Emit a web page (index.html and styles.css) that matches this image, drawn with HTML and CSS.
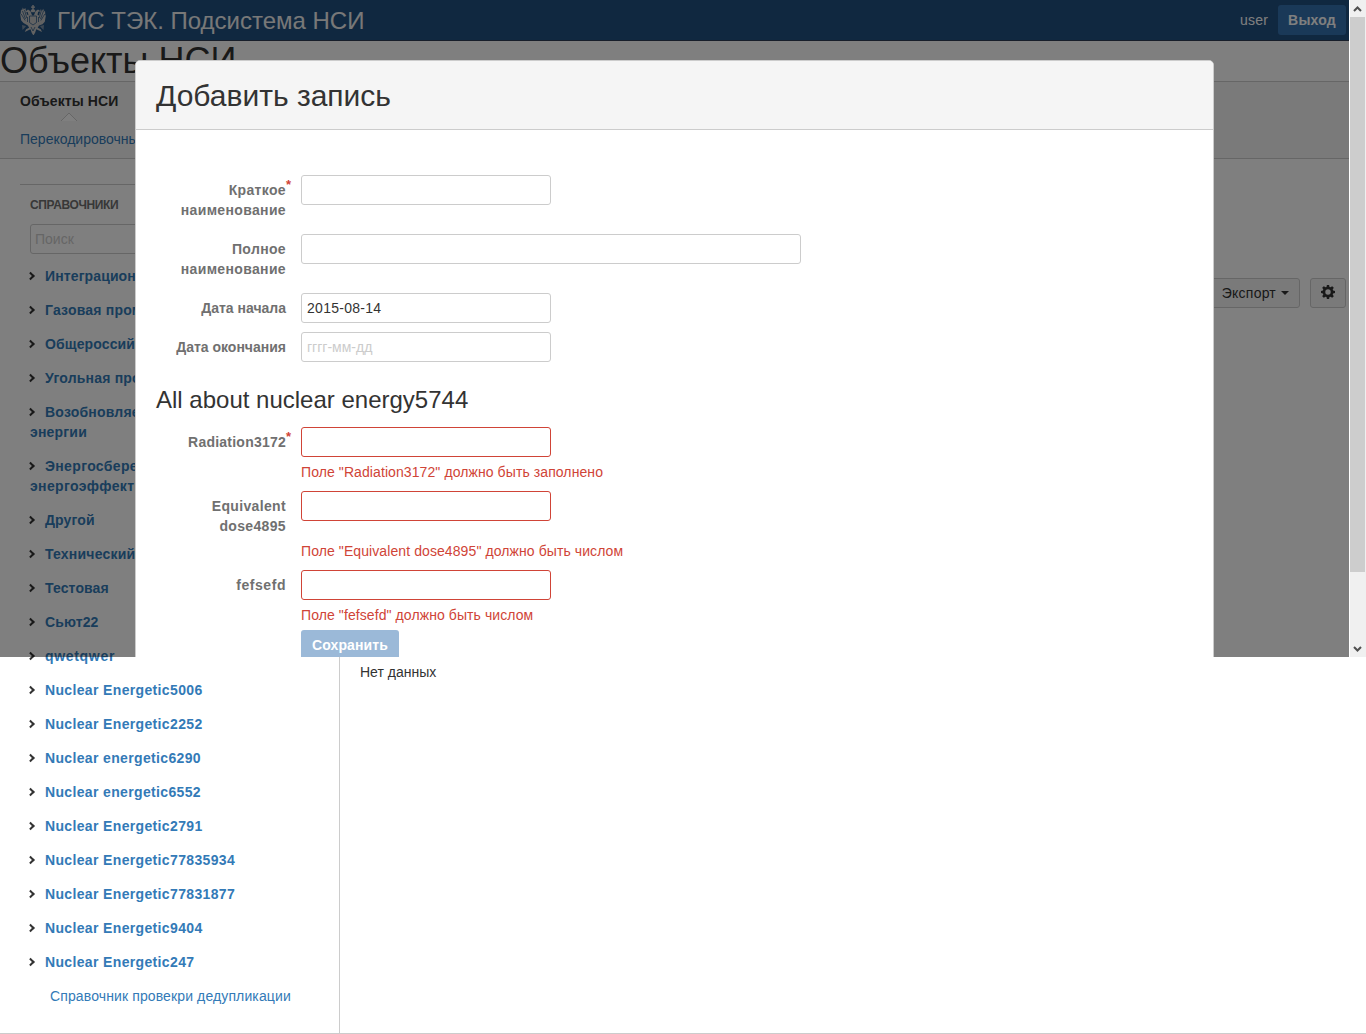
FILE: index.html
```html
<!DOCTYPE html>
<html lang="ru">
<head>
<meta charset="utf-8">
<title>ГИС ТЭК. Подсистема НСИ</title>
<link rel="stylesheet" href="styles.css">
</head>
<body>
<div class="page">
  <header class="header">
    <svg class="emblem" viewBox="0 0 26 30" width="26" height="30">
      <g fill="currentColor">
        <path d="M12.3 0h1.4v1.5h1.3v1.3h-1.3v1.5l1.6.7-.6 2.2h-3.4L10.700 5l1.600-.7V2.800H11V1.500h1.300z"/>
        <path d="M8 4.500l2.500 1.700 1.200 3.300L13 11l1.300-1.500 1.200-3.300L18 4.500l2.500 1.700-2.300.6-.7 3 1.500.7 1.700-6.200 1.500 1.500 1-2.100.8 3 1-1.200.3 4.200.5 1-1 6-2.300 2.500-3.500 1.200-1.300 2.300 3 1.500 1.300 2.800-3-1.600-2.700-1.100-1.200 3.500-1.700 2.700-1.700-2.700-1.200-3.500-2.700 1.100-3 1.600 1.300-2.800 3-1.500-1.300-2.300L3.500 18l-2.300-2.500-1-6 .5-1L1 4.300l1 1.200.8-3 1 2.100 1.500-1.500L7 9.500l1.500.7-.7-3-2.300-.6z"/>
        <path d="M2 20l4 1-1 1.500L2.500 25zM24 20l-4 1 1 1.500 2.500 2.500z" opacity=".55"/>
      </g>
      <g fill="none" stroke="#205081" stroke-width=".7">
        <path d="M2.500 6l3 8M1.200 9l4 6.500M4.500 5l2.300 8M23.500 6l-3 8M24.800 9l-4 6.500M21.500 5l-2.300 8M9.500 11h7v6.500L13 20l-3.500-2.500zM7.500 12v5M18.500 12v5M11 22l2 4 2-4"/>
      </g>
    </svg>
    <span class="brand">ГИС ТЭК. Подсистема НСИ</span>
    <span class="user">user</span>
    <a class="logout">Выход</a>
  </header>
  <h1 class="title">Объекты НСИ</h1>
  <nav class="nav">
    <a class="nav-current">Объекты НСИ</a>
    <a class="nav-link">Перекодировочны</a>
    <svg class="nav-arrow" width="18" height="9" viewBox="0 0 18 9"><path d="M1 9L9 1l8 8" fill="#fff" stroke="#ccc"/></svg>
  </nav>
  <div class="content">
    <aside class="sidebar">
      <div class="catalog">
        <h2 class="catalog-title">Справочники</h2>
        <input class="search" placeholder="Поиск">
        <ul class="tree">
          <li>Интеграцион</li>
          <li class="mid">Газовая пром</li>
          <li>Общероссий</li>
          <li class="mid">Угольная про</li>
          <li class="mid">Возобновляе<br>энергии</li>
          <li class="loose">Энергосбере<br>энергоэффекти</li>
          <li>Другой</li>
          <li class="mid">Технический</li>
          <li>Тестовая</li>
          <li>Сьют22</li>
          <li class="wider">qwetqwer</li>
          <li class="loose">Nuclear Energetic5006</li>
          <li class="loose">Nuclear Energetic2252</li>
          <li class="loose">Nuclear energetic6290</li>
          <li class="loose">Nuclear energetic6552</li>
          <li class="loose">Nuclear Energetic2791</li>
          <li class="loose">Nuclear Energetic77835934</li>
          <li class="loose">Nuclear Energetic77831877</li>
          <li class="loose">Nuclear Energetic9404</li>
          <li class="loose">Nuclear Energetic247</li>
          <li class="leaf">Справочник провекри дедупликации</li>
        </ul>
      </div>
    </aside>
    <main class="main">
      <div class="toolbar">
        <button class="btn export"><span>Экспорт</span><svg width="8" height="4" viewBox="0 0 8 4"><path d="M0 0h8L4 4z" fill="#333"/></svg></button>
        <button class="btn gear"><svg width="14" height="14" viewBox="0 0 14 14"><path fill="#333" fill-rule="evenodd" d="M5.900 0h2.200l.4 1.900 1 .4L11.200 1.200l1.600 1.600-1.100 1.700.4 1 1.900.4v2.200l-1.900.4-.4 1 1.100 1.700-1.600 1.600-1.700-1.100-1 .4-.4 1.900H5.900l-.4-1.900-1-.4-1.700 1.100-1.600-1.600 1.100-1.700-.4-1L0 8.100V5.900l1.900-.4.4-1-1.100-1.700 1.600-1.600 1.700 1.100 1-.4zM7 4.300a2.700 2.700 0 1 0 0 5.400 2.700 2.700 0 0 0 0-5.400z"/></svg></button>
      </div>
      <p class="empty">Нет данных</p>
    </main>
  </div>
</div>

<div class="viewport">
  <div class="blanket">
    <section class="dialog">
      <header class="dialog-head"><h2>Добавить запись</h2></header>
      <form class="form">
        <div class="field tall"><label class="req loose">Краткое<br>наименование</label><div><input></div></div>
        <div class="field tall"><label class="loose">Полное<br>наименование</label><div><input class="wide"></div></div>
        <div class="field"><label>Дата начала</label><div><input class="date" value="2015-08-14"></div></div>
        <div class="field"><label>Дата окончания</label><div><input placeholder="гггг-мм-дд"></div></div>
        <h3>All about nuclear energy5744</h3>
        <div class="field invalid"><label class="req mid">Radiation3172</label><div><input><p>Поле "Radiation3172" должно быть заполнено</p></div></div>
        <div class="field invalid two-line"><label class="loose">Equivalent<br>dose4895</label><div><input><p>Поле "Equivalent dose4895" должно быть числом</p></div></div>
        <div class="field invalid"><label class="wider">fefsefd</label><div><input><p>Поле "fefsefd" должно быть числом</p></div></div>
        <button class="save" type="button">Сохранить</button>
      </form>
    </section>
  </div>
  <div class="scrollbar">
    <svg width="17" height="17" viewBox="0 0 17 17"><path d="M5 11l3.500-3.500L12 11" fill="none" stroke="#505050" stroke-width="2"/></svg>
    <div class="thumb"></div>
    <svg width="17" height="17" viewBox="0 0 17 17"><path d="M5 7l3.500 3.500L12 7" fill="none" stroke="#505050" stroke-width="2"/></svg>
  </div>
</div>
</body>
</html>
```
FILE: styles.css
```css
*, ::before, ::after { box-sizing: border-box; }
body {
  margin: 0;
  position: relative;
  width: 1366px;
  height: 1034px;
  overflow: hidden;
  background: #fff;
  color: #333;
  font: 14px/20px "Liberation Sans", Arial, sans-serif;
}
h1, h2, h3, p, ul { margin: 0; padding: 0; font-weight: normal; }
input, button { font: inherit; color: inherit; }

.page { height: 1034px; display: flex; flex-direction: column; }
.header {
  display: flex;
  align-items: center;
  height: 41px;
  flex: none;
  padding: 0 20px;
  background: #205081;
  border-bottom: 1px solid #2e3d54;
  color: #fff;
}
.emblem { color: #c4c4c4; margin-right: 11px; }
.brand { font-size: 24px; line-height: 40px; color: #f0f0f0; padding-top: 1px; }
.user { margin-left: auto; letter-spacing: .2px; }
.logout {
  margin-left: 10px;
  width: 68px;
  height: 30px;
  border-radius: 3px;
  background: #3572b0;
  line-height: 30px;
  text-align: center;
  font-weight: bold;
  letter-spacing: .2px;
}
.title { flex: none; height: 40px; font-size: 36px; line-height: 40px; }
.nav {
  position: relative;
  flex: none;
  height: 78px;
  padding: 9px 20px;
  background: #f5f5f5;
  border: solid #ccc;
  border-width: 1px 0;
  display: flex;
  flex-direction: column;
  gap: 18px;
}
.nav-current { font-weight: bold; letter-spacing: .1px; }
.nav-link { color: #337ab7; }
.nav-arrow { position: absolute; left: 60px; top: 30px; }

.content { flex: 1; display: flex; border-bottom: 1px solid #ccc; }
.sidebar { width: 340px; border-right: 1px solid #ccc; padding: 25px 20px 0; }
.catalog { border-top: 1px solid #ccc; padding: 10px 10px 0; }
.catalog-title { font-size: 12px; line-height: 20px; font-weight: bold; text-transform: uppercase; color: #707070; letter-spacing: -.37px; }
.search { display: block; margin-top: 9px; width: 250px; height: 30px; padding: 0 4px; border: 1px solid #ccc; border-radius: 3px; }
input::placeholder { color: #ccc; opacity: 1; }
.tree { list-style: none; margin-top: 12px; display: flex; flex-direction: column; gap: 14px; font-weight: bold; color: #337ab7; white-space: nowrap; letter-spacing: .12px; }
.tree li:not(.leaf)::before {
  content: "";
  display: inline-block;
  width: 6px;
  height: 6px;
  margin: 0 9px 2px 0;
  border: solid #333;
  border-width: 2px 2px 0 0;
  transform: translateX(-2.4px) rotate(45deg);
}
.mid { letter-spacing: .23px; }
.loose { letter-spacing: .35px; }
.tree .mid { letter-spacing: .2px; }
.wider { letter-spacing: .56px; }
.tree .wider { letter-spacing: .68px; }
.tree .leaf { font-weight: normal; padding-left: 20px; }
.main { flex: 1; padding: 119px 20px 0; }
.toolbar { display: flex; justify-content: flex-end; gap: 10px; }
.btn { height: 30px; border: 1px solid #ccc; border-radius: 3px; background: #f5f5f5; display: flex; align-items: center; justify-content: center; padding: 0 10px; }
.export { gap: 5px; letter-spacing: .23px; }
.gear { width: 36px; padding: 0 0 2px; }
.empty { margin-top: 354px; }

.viewport { position: absolute; left: 0; top: 0; width: 1366px; height: 657px; display: flex; overflow: hidden; }
.blanket { width: 1349px; height: 657px; background: rgba(0, 0, 0, .5); padding: 60px 0 0 135px; overflow: hidden; }
.dialog { width: 1079px; height: 640px; background: #fff; border: 1px solid #ccc; border-radius: 5px; overflow: hidden; }
.dialog-head { height: 69px; background: #f5f5f5; border-bottom: 1px solid #ccc; padding: 15px 20px 0; }
.dialog-head h2 { font-size: 30px; line-height: 40px; }
.form { padding: 45px 19px; display: flex; flex-direction: column; }
.field { display: grid; grid-template-columns: 131px 1fr; column-gap: 15px; margin-bottom: 9px; }
.field > label { padding-top: 5px; text-align: right; font-weight: bold; color: #707070; position: relative; }
.field.tall { height: 50px; }
.req::after { content: "*"; position: absolute; left: 131px; top: 0; color: #d04437; font-weight: bold; font-size: 13px; }
.field input { display: block; width: 250px; height: 30px; padding: 0 5px; border: 1px solid #ccc; border-radius: 3px; background: #fff; }
.field input.wide { width: 500px; }
.field input.date { letter-spacing: .28px; }
.form h3 { font-size: 24px; line-height: 28px; margin: 15px 0 13px; padding-left: 1px; }
.field.invalid { color: #d04437; }
.field.invalid input { border-color: #d04437; }
.field.invalid p { margin-top: 5px; letter-spacing: .09px; }
.two-line.invalid p { margin-top: 20px; }
.save { width: 98px; height: 30px; margin: -4px 0 0 146px; border: 0; border-radius: 3px; background: #9bb9d8; color: #fff; font-weight: bold; padding: 0; letter-spacing: .12px; }

.scrollbar { width: 17px; background: #f0f0f0; border-left: 1px solid #fff; display: flex; flex-direction: column; }
.scrollbar svg { margin-left: -1px; flex: none; }
.thumb { width: 15px; height: 555px; margin-bottom: 68px; flex: none; background: #cdcdcd; }
```
